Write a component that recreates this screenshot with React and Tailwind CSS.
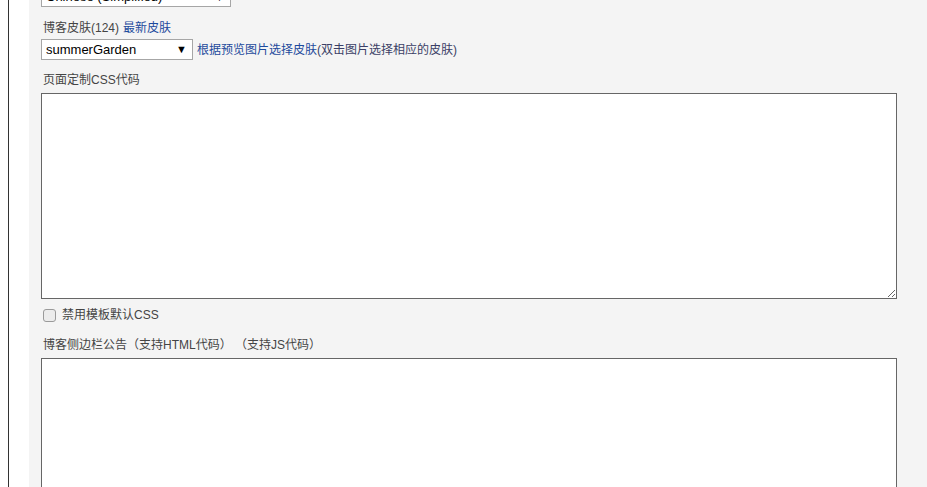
import React from "react";

const font = "font-['Liberation_Sans','Noto_Sans_CJK_SC',sans-serif]";

const FakeSelect = ({ value, className }) => (
  <div
    className={`flex items-center justify-between bg-white border border-[#a6a6a6] pl-[4px] pr-[5px] text-[13px] text-black ${className}`}
  >
    <span>{value}</span>
    <span className="text-[11px] leading-none">▼</span>
  </div>
);

const App = () => {
  return (
    <div className={`flex h-[487px] overflow-hidden bg-white ${font}`}>
      <div className="w-[8px] bg-white" />
      <div className="w-px bg-[#333]" />
      <div className="w-[20px] bg-white" />
      <div className="flex-1 bg-[#f4f4f4] pl-[12px] pr-[30px] text-[12px] text-[#444]">
        <FakeSelect value="Chinese (Simplified)" className="-mt-[13px] h-[20px] w-[190px]" />

        <div className="mt-[12px] flex h-[18px] items-center pl-[2px]">
          <span>博客皮肤(124)</span>
          <a className="ml-[4px] text-[#1d4a9c]">最新皮肤</a>
        </div>

        <div className="mt-[2px] flex items-center">
          <FakeSelect value="summerGarden" className="h-[21px] w-[152px]" />
          <a className="ml-[4px] text-[#1d4a9c]">根据预览图片选择皮肤</a>
          <span className="text-[#3b3f66]">(双击图片选择相应的皮肤)</span>
        </div>

        <div className="mt-[11px] flex h-[18px] items-center pl-[2px]">页面定制CSS代码</div>

        <textarea className="mt-[4px] block h-[206px] w-[856px] border border-[#666] bg-white outline-none" />

        <div className="mt-[7px] flex h-[18px] items-center pl-[2px]">
          <span className="h-[13px] w-[13px] rounded-[3px] border border-[#9a9a9a] bg-[#ececec]" />
          <span className="ml-[6px]">禁用模板默认CSS</span>
        </div>

        <div className="mt-[12px] flex h-[18px] items-center pl-[2px]">
          博客侧边栏公告（支持HTML代码）&nbsp;（支持JS代码）
        </div>

        <textarea className="mt-[4px] block h-[206px] w-[856px] border border-[#666] bg-white outline-none" />
      </div>
    </div>
  );
};

export default App;
